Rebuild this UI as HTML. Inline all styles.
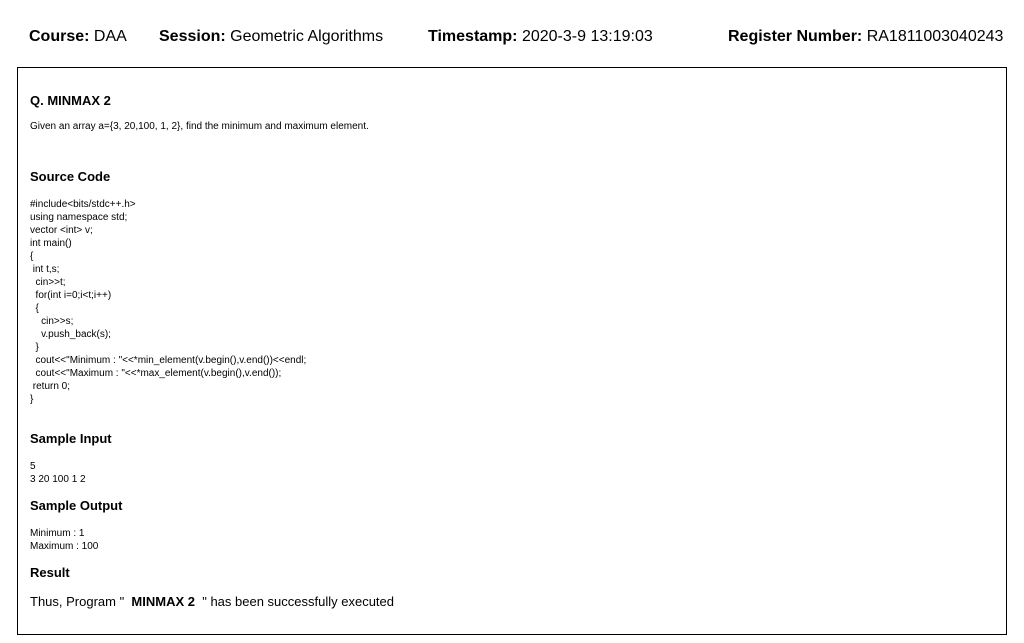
<!DOCTYPE html>
<html><head><meta charset="utf-8"><style>
body{margin:0;width:1024px;height:643px;background:#fff;font-family:"Liberation Sans",Arial,sans-serif;color:#000;position:relative;overflow:hidden}
.a{position:absolute;white-space:pre;line-height:13px}
.h{font-size:16px;line-height:18px;top:28px}
.box{position:absolute;left:17px;top:67px;width:988px;height:566px;border:1px solid #000}
.t{font-weight:bold;font-size:13px;left:30px}
.s{font-size:10px;left:30px}
</style></head><body>
<div class="a h" style="left:29px"><b>Course:</b> DAA</div>
<div class="a h" style="left:159px"><b>Session:</b> Geometric Algorithms</div>
<div class="a h" style="left:428px"><b>Timestamp:</b> 2020-3-9 13:19:03</div>
<div class="a h" style="left:728px"><b>Register Number:</b> RA1811003040243</div>
<div class="box"></div>
<div class="a t" style="top:94px">Q. MINMAX 2</div>
<div class="a s" style="top:120px">Given an array a={3, 20,100, 1, 2}, find the minimum and maximum element.</div>
<div class="a t" style="top:170px">Source Code</div>
<div class="a s" style="top:198px">#include&lt;bits/stdc++.h&gt;
using namespace std;
vector &lt;int&gt; v;
int main()
{
 int t,s;
  cin&gt;&gt;t;
  for(int i=0;i&lt;t;i++)
  {
    cin&gt;&gt;s;
    v.push_back(s);
  }
  cout&lt;&lt;"Minimum : "&lt;&lt;*min_element(v.begin(),v.end())&lt;&lt;endl;
  cout&lt;&lt;"Maximum : "&lt;&lt;*max_element(v.begin(),v.end());
 return 0;
}</div>
<div class="a t" style="top:432px">Sample Input</div>
<div class="a s" style="top:460px">5
3 20 100 1 2</div>
<div class="a t" style="top:499px">Sample Output</div>
<div class="a s" style="top:527px">Minimum : 1
Maximum : 100</div>
<div class="a t" style="top:566px">Result</div>
<div class="a" style="left:30px;top:594px;font-size:13px;line-height:15px">Thus, Program " <b>&nbsp;MINMAX 2&nbsp;</b> " has been successfully executed</div>
</body></html>
